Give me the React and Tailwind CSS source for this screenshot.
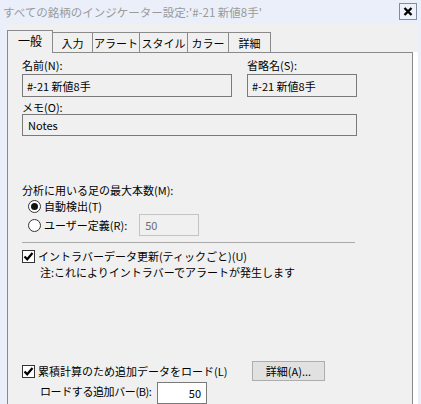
import React from "react";

const tabs = [
  { label: "一般", w: "w-[46px]", active: true },
  { label: "入力", w: "w-[41px]" },
  { label: "アラート", w: "w-[48px]" },
  { label: "スタイル", w: "w-[49px]" },
  { label: "カラー", w: "w-[42px]" },
  { label: "詳細", w: "w-[43px]" },
];

function Checkbox() {
  return (
    <span className="flex h-[13px] w-[13px] shrink-0 items-center justify-center border border-[#333] bg-white">
      <svg width="11" height="11" viewBox="0 0 11 11">
        <path d="M1.5 5.5 L4.2 8.3 L9.5 2" fill="none" stroke="#000" strokeWidth="2.2" />
      </svg>
    </span>
  );
}

function Radio({ checked }) {
  return (
    <span className="flex h-[13px] w-[13px] shrink-0 items-center justify-center rounded-full border border-[#333] bg-white">
      {checked ? <span className="h-[7px] w-[7px] rounded-full bg-[#111]" /> : null}
    </span>
  );
}

function TextBox({ value, className }) {
  return (
    <div className={`flex items-center border border-[#7a7a7a] bg-[#f0f0f0] pl-[4px] ${className}`}>
      {value}
    </div>
  );
}

export default function App() {
  return (
    <div className="flex h-[404px] w-[421px] flex-col overflow-hidden bg-[#eaeff9] text-[11px] leading-[16px] text-black [font-family:'Noto_Sans_CJK_JP','Noto_Sans',sans-serif]">
      <div className="flex h-[24px] shrink-0 items-center justify-between pl-[3px] pr-[4px]">
        <span className="text-[11.5px] text-[#9a9a9a]">すべての銘柄のインジケーター設定:'#-21 新値8手'</span>
        <span className="mb-[2px] flex h-[17px] w-[18px] items-center justify-center border border-[#7f8ca4] bg-[#eef2fb]">
          <svg width="10" height="9" viewBox="0 0 10 9">
            <path d="M1.5 1 L8.5 8 M8.5 1 L1.5 8" stroke="#000" strokeWidth="2.4" />
          </svg>
        </span>
      </div>

      <div className="ml-[7px] flex w-[411px] flex-1 flex-col bg-[#f0f0f0]">
        <div className="mt-[6px] flex h-[22px] items-end">
          {tabs.map((tab, i) => (
            <div
              key={tab.label}
              className={`flex items-center justify-center border border-b-0 border-[#8a8a8a] ${tab.w} ${
                i > 0 ? "-ml-px" : ""
              } ${
                tab.active
                  ? "relative z-10 -mb-px h-[23px] bg-[#f0f0f0] pb-[2px] text-[12px]"
                  : "h-[20px] bg-[#f0f0f0]"
              }`}
            >
              {tab.label}
            </div>
          ))}
        </div>

        <div className="flex flex-1">
          <div className="flex w-[406px] flex-col border border-[#8a8a8a] pl-[14px]">
            <div className="mt-[4px] flex gap-[15px]">
              <div className="flex w-[210px] flex-col">
                <span>名前(N):</span>
                <TextBox value="#-21 新値8手" className="mt-[1px] h-[23px] w-[210px]" />
              </div>
              <div className="flex w-[110px] flex-col">
                <span>省略名(S):</span>
                <TextBox value="#-21 新値8手" className="mt-[1px] h-[23px] w-[110px]" />
              </div>
            </div>

            <span className="mt-[3px] leading-[14px]">メモ(O):</span>
            <TextBox value="Notes" className="h-[22px] w-[335px] pl-[5px]" />

            <span className="mt-[46px]">分析に用いる足の最大本数(M):</span>
            <div className="flex h-[16px] items-center gap-[3px] pl-[6px]">
              <Radio checked />
              <span>自動検出(T)</span>
            </div>
            <div className="flex h-[22px] items-center gap-[3px] pl-[6px]">
              <Radio />
              <span>ユーザー定義(R):</span>
              <div className="ml-[9px] flex h-[22px] w-[60px] items-center border border-[#c4c4c4] pl-[5px] text-[#6d6d6d]">
                50
              </div>
            </div>

            <div className="mt-[6px] h-px w-[333px] bg-[#a9a9a9]" />

            <div className="mt-[5px] flex h-[16px] items-center gap-[3px]">
              <Checkbox />
              <span>イントラバーデータ更新(ティックごと)(U)</span>
            </div>
            <span className="pl-[18px]">注:これによりイントラバーでアラートが発生します</span>

            <div className="mt-[81px] flex h-[20px] items-center">
              <Checkbox />
              <span className="ml-[3px] w-[214px]">累積計算のため追加データをロード(L)</span>
              <div className="flex h-[20px] w-[73px] items-center justify-center border border-[#adadad] bg-[#e1e1e1]">
                詳細(A)...
              </div>
            </div>
            <div className="mt-[1px] flex items-start">
              <span className="mt-[1px] w-[135px] whitespace-nowrap pl-[18px] tracking-[-0.4px]">ロードする追加バー(B):</span>
              <div className="flex h-[22px] w-[50px] items-center justify-end border border-[#7a7a7a] bg-white pr-[5px]">
                50
              </div>
            </div>
          </div>
          <div className="w-[5px] bg-white" />
        </div>
      </div>
    </div>
  );
}
